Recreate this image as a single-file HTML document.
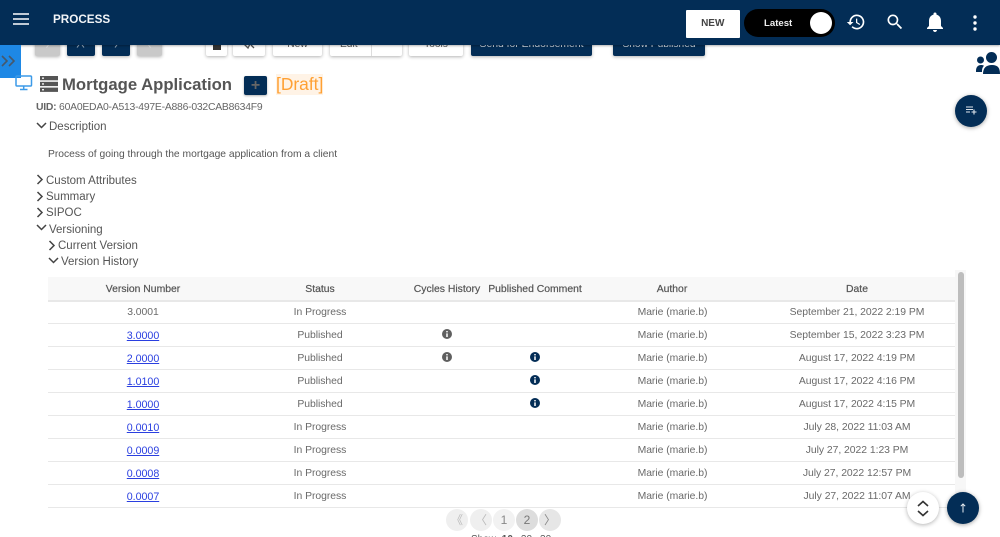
<!DOCTYPE html>
<html><head><meta charset="utf-8"><style>
html,body{margin:0;padding:0;background:#fff;width:1000px;height:537px;overflow:hidden}
#w{position:relative;width:1000px;height:537px;overflow:hidden;font-family:"Liberation Sans",sans-serif;color:#555}
.a{position:absolute}
.t{position:absolute;white-space:nowrap;line-height:14px}
.c{position:absolute;white-space:nowrap;transform:translateX(-50%);font-size:10.4px;line-height:14px;color:#6a6a6a;letter-spacing:-.04px}
.h{font-weight:400;color:#555;font-size:10.4px;-webkit-text-stroke:.2px #555;letter-spacing:0}
.l{color:#2a3fe0;text-decoration:underline;font-size:10.7px}
.sep{position:absolute;left:48px;width:907px;height:1px;background:#e8e8e8}
.b{position:absolute;top:34px;height:22px;border-radius:2px;box-shadow:0 1px 3px rgba(0,0,0,.3);background:#fff;font-size:10.2px;text-align:center;line-height:21px;color:#555;overflow:hidden;white-space:nowrap}
.n{background:#032d56;color:#cfd8e3}
.g{background:#c9c9c9}
.s{position:absolute;font-size:11.5px;line-height:14px;color:#555;white-space:nowrap}
.i{position:absolute}
.p{position:absolute;top:509px;width:22px;height:22px;border-radius:50%;background:#efefef;text-align:center;line-height:22px;font-size:12px;color:#bbb}
</style></head><body><div id="w">
<div class="b g" style="left:35px;width:25px"><svg class="i" style="left:10px;top:11px" width="5" height="3" viewBox="0 0 5 3" fill="none" stroke="#e6e6e6" stroke-width="1"><path d="M3.500 0L1.500 2.500"/></svg></div>
<div class="b n" style="left:67px;width:28px"><svg class="i" style="left:9px;top:11px" width="10" height="3" viewBox="0 0 10 3" fill="none" stroke="#9fb0c2" stroke-width="1"><path d="M3 0L1 2.500M6 0l2 2.500"/></svg></div>
<div class="b n" style="left:102px;width:28px"><svg class="i" style="left:12px;top:11px" width="4" height="3" viewBox="0 0 4 3" fill="none" stroke="#9fb0c2" stroke-width="1"><path d="M3 0L1 2.500"/></svg></div>
<div class="b g" style="left:137px;width:25px"><svg class="i" style="left:10px;top:11px" width="5" height="3" viewBox="0 0 5 3" fill="none" stroke="#e6e6e6" stroke-width="1"><path d="M1.500 0l2 2.500"/></svg></div>
<div class="b" style="left:206px;width:21px"><div class="a" style="left:7px;top:8px;width:8px;height:8px;background:#333"></div></div>
<div class="b" style="left:233px;width:32px"><svg class="i" style="left:10px;top:10px" width="12" height="6" viewBox="0 0 12 6" fill="none" stroke="#555" stroke-width="1.300"><path d="M1 0l4 4 2-4M8 1l3 3"/></svg></div>
<div class="b" style="left:273px;width:49px">New</div>
<div class="b" style="left:330px;width:72px;text-align:left"><span style="margin-left:10px">Edit</span><div class="a" style="left:41px;top:0;width:1px;height:22px;background:#ddd"></div></div>
<div class="b" style="left:409px;width:54px">Tools</div>
<div class="b n" style="left:471px;width:121px;font-size:10.400px">Send for Endorsement</div>
<div class="b n" style="left:613px;width:92px">Show Published</div>

<div class="a" style="left:0;top:0;width:1000px;height:45px;background:#032d56;box-shadow:0 1px 2px rgba(0,0,0,.3)"></div>
<svg class="i" style="left:13px;top:13px" width="16" height="12" viewBox="0 0 16 12"><path d="M0 1h16M0 6h16M0 11h16" stroke="#fff" stroke-width="1.600"/></svg>
<div class="t" style="left:53px;top:12.500px;font-size:11.700px;font-weight:700;color:#f2f4f7">PROCESS</div>
<div class="a" style="left:685.500px;top:10px;width:54.500px;height:28px;background:#fff;border-radius:1px;text-align:center;font-size:10px;font-weight:700;line-height:28px;color:#444">NEW</div>
<div class="a" style="left:744px;top:9px;width:91px;height:28px;background:#000;border-radius:14px"></div>
<div class="t" style="left:764px;top:16.500px;font-size:9.600px;font-weight:700;color:#eee">Latest</div>
<div class="a" style="left:810px;top:12px;width:22px;height:22px;background:#fff;border-radius:50%"></div>
<svg class="i" style="left:846px;top:12px" width="20" height="20" viewBox="0 0 24 24" fill="#fff"><path d="M13 3a9 9 0 0 0-9 9H1l3.900 3.900L9 12H6a7 7 0 1 1 2.050 4.950L6.640 18.360A9 9 0 1 0 13 3zm-1 5v5l4.280 2.540.72-1.210-3.500-2.080V8z"/></svg>
<svg class="i" style="left:885px;top:12px" width="20" height="20" viewBox="0 0 24 24" fill="#fff"><path d="M15.500 14h-.79l-.28-.27A6.470 6.470 0 0 0 16 9.500 6.500 6.500 0 1 0 9.500 16c1.610 0 3.090-.59 4.230-1.570l.27.28v.79l5 4.990L20.490 19zm-6 0A4.500 4.500 0 1 1 14 9.500 4.490 4.490 0 0 1 9.500 14z"/></svg>
<svg class="i" style="left:923px;top:10px" width="24" height="24" viewBox="0 0 24 24" fill="#fff"><path d="M12 22c1.100 0 2-.9 2-2h-4c0 1.100.9 2 2 2zm6-6v-5c0-3.070-1.630-5.640-4.500-6.320V4a1.500 1.500 0 0 0-3 0v.68C7.640 5.360 6 7.920 6 11v5l-2 2v1h16v-1z"/></svg>
<svg class="i" style="left:965px;top:13px" width="20" height="20" viewBox="0 0 20 20" fill="#fff"><circle cx="10" cy="4" r="1.700"/><circle cx="10" cy="10" r="1.700"/><circle cx="10" cy="16" r="1.700"/></svg>

<div class="a" style="left:0;top:45px;width:21px;height:33px;background:#1e88e5"></div>
<svg class="i" style="left:1px;top:55px" width="15" height="12" viewBox="0 0 15 12" fill="none" stroke="#46586b" stroke-width="1.600"><path d="M1 1l5 5-5 5M8 1l5 5-5 5"/></svg>
<svg class="i" style="left:15px;top:75px" width="18" height="16" viewBox="0 0 18 16" fill="none" stroke="#3c9ae8" stroke-width="1.500"><rect x="1" y="1" width="15.500" height="10" rx="1"/><path d="M8.700 11v3M5 14.500h7.500"/></svg>
<svg class="i" style="left:40px;top:76px" width="18" height="16" viewBox="0 0 18 16" fill="#555"><rect x="0" y="0" width="18" height="4.300"/><rect x="0" y="5.800" width="18" height="4.300"/><rect x="0" y="11.600" width="18" height="4.300"/><g fill="#fff"><rect x="2" y="1.500" width="2" height="1.300"/><rect x="2" y="7.300" width="2" height="1.300"/><rect x="2" y="13.100" width="2" height="1.300"/></g></svg>
<div class="t" style="left:62px;top:74.500px;font-size:16.700px;line-height:20px;font-weight:700;color:#555">Mortgage Application</div>
<div class="a" style="left:244px;top:76px;width:23px;height:19px;background:#032d56;border-radius:2px;box-shadow:0 1px 2px rgba(0,0,0,.3);text-align:center;line-height:19px;font-size:16px;font-weight:700;color:#666">+</div>
<div class="t" style="left:276px;top:74px;font-size:17.400px;line-height:21px;color:#ffa033;background:#fff3e6">[Draft]</div>
<div class="t" style="left:36px;top:100px;font-size:10.400px;color:#666;letter-spacing:-.24px;margin-top:1px"><b>UID:</b> 60A0EDA0-A513-497E-A886-032CAB8634F9</div>

<svg class="i" style="left:36px;top:122px" width="11" height="8" viewBox="0 0 11 8" fill="none" stroke="#444" stroke-width="1.500"><path d="M1 1l4.500 4.500L10 1"/></svg>
<div class="s" style="left:49px;top:120px">Description</div>
<div class="t" style="left:48px;top:147px;font-size:10.300px;color:#555;margin-top:1px">Process of going through the mortgage application from a client</div>
<svg class="i" style="left:36px;top:174px" width="8" height="11" viewBox="0 0 8 11" fill="none" stroke="#444" stroke-width="1.500"><path d="M1.500 1l4.500 4.500L1.500 10"/></svg>
<div class="s" style="left:46px;top:174px">Custom Attributes</div>
<svg class="i" style="left:36px;top:191px" width="8" height="11" viewBox="0 0 8 11" fill="none" stroke="#444" stroke-width="1.500"><path d="M1.500 1l4.500 4.500L1.500 10"/></svg>
<div class="s" style="left:46px;top:190px">Summary</div>
<svg class="i" style="left:36px;top:207px" width="8" height="11" viewBox="0 0 8 11" fill="none" stroke="#444" stroke-width="1.500"><path d="M1.500 1l4.500 4.500L1.500 10"/></svg>
<div class="s" style="left:46px;top:206px">SIPOC</div>
<svg class="i" style="left:36px;top:224px" width="11" height="8" viewBox="0 0 11 8" fill="none" stroke="#444" stroke-width="1.500"><path d="M1 1l4.500 4.500L10 1"/></svg>
<div class="s" style="left:49px;top:223px">Versioning</div>
<svg class="i" style="left:48px;top:240px" width="8" height="11" viewBox="0 0 8 11" fill="none" stroke="#444" stroke-width="1.500"><path d="M1.500 1l4.500 4.500L1.500 10"/></svg>
<div class="s" style="left:58px;top:239px">Current Version</div>
<svg class="i" style="left:48px;top:257px" width="11" height="8" viewBox="0 0 11 8" fill="none" stroke="#444" stroke-width="1.500"><path d="M1 1l4.500 4.500L10 1"/></svg>
<div class="s" style="left:61px;top:255px">Version History</div>

<div class="a" style="left:48px;top:277px;width:907px;height:23px;background:#f8f8f8"></div>
<div class="a" style="left:955px;top:270px;width:11px;height:238px;background:#f7f7f7"></div>
<div class="a" style="left:958px;top:272px;width:6px;height:206px;background:#bdbdbd;border-radius:3px"></div>
<div class="c h" style="left:143px;top:283px">Version Number</div>
<div class="c h" style="left:320px;top:283px">Status</div>
<div class="c h" style="left:447px;top:283px">Cycles History</div>
<div class="c h" style="left:535px;top:283px">Published Comment</div>
<div class="c h" style="left:672px;top:283px">Author</div>
<div class="c h" style="left:857px;top:283px">Date</div>
<div class="sep" style="top:300px;height:2px"></div><div class="sep" style="top:323px"></div><div class="sep" style="top:346px"></div><div class="sep" style="top:369px"></div><div class="sep" style="top:392px"></div><div class="sep" style="top:415px"></div><div class="sep" style="top:438px"></div><div class="sep" style="top:461px"></div><div class="sep" style="top:484px"></div><div class="sep" style="top:507px"></div>

<div class="c" style="left:143px;top:306px">3.0001</div><div class="c" style="left:320px;top:306px">In Progress</div><div class="c" style="left:672.500px;top:306px">Marie (marie.b)</div><div class="c" style="left:857px;top:306px">September 21, 2022 2:19 PM</div>
<div class="c l" style="left:143px;top:329px">3.0000</div><div class="c" style="left:320px;top:329px">Published</div><div class="c" style="left:672.500px;top:329px">Marie (marie.b)</div><div class="c" style="left:857px;top:329px">September 15, 2022 3:23 PM</div>
<div class="c l" style="left:143px;top:352px">2.0000</div><div class="c" style="left:320px;top:352px">Published</div><div class="c" style="left:672.500px;top:352px">Marie (marie.b)</div><div class="c" style="left:857px;top:352px">August 17, 2022 4:19 PM</div>
<div class="c l" style="left:143px;top:375px">1.0100</div><div class="c" style="left:320px;top:375px">Published</div><div class="c" style="left:672.500px;top:375px">Marie (marie.b)</div><div class="c" style="left:857px;top:375px">August 17, 2022 4:16 PM</div>
<div class="c l" style="left:143px;top:398px">1.0000</div><div class="c" style="left:320px;top:398px">Published</div><div class="c" style="left:672.500px;top:398px">Marie (marie.b)</div><div class="c" style="left:857px;top:398px">August 17, 2022 4:15 PM</div>
<div class="c l" style="left:143px;top:421px">0.0010</div><div class="c" style="left:320px;top:421px">In Progress</div><div class="c" style="left:672.500px;top:421px">Marie (marie.b)</div><div class="c" style="left:857px;top:421px">July 28, 2022 11:03 AM</div>
<div class="c l" style="left:143px;top:444px">0.0009</div><div class="c" style="left:320px;top:444px">In Progress</div><div class="c" style="left:672.500px;top:444px">Marie (marie.b)</div><div class="c" style="left:857px;top:444px">July 27, 2022 1:23 PM</div>
<div class="c l" style="left:143px;top:467px">0.0008</div><div class="c" style="left:320px;top:467px">In Progress</div><div class="c" style="left:672.500px;top:467px">Marie (marie.b)</div><div class="c" style="left:857px;top:467px">July 27, 2022 12:57 PM</div>
<div class="c l" style="left:143px;top:490px">0.0007</div><div class="c" style="left:320px;top:490px">In Progress</div><div class="c" style="left:672.500px;top:490px">Marie (marie.b)</div><div class="c" style="left:857px;top:490px">July 27, 2022 11:07 AM</div>

<svg class="i" style="left:442px;top:329px" width="10" height="10" viewBox="0 0 10 10"><circle cx="5" cy="5" r="5" fill="#5f5f5f"/><path d="M5 2v1.400M5 4.400V8" stroke="#fff" stroke-width="1.500"/></svg>
<svg class="i" style="left:442px;top:352px" width="10" height="10" viewBox="0 0 10 10"><circle cx="5" cy="5" r="5" fill="#5f5f5f"/><path d="M5 2v1.400M5 4.400V8" stroke="#fff" stroke-width="1.500"/></svg>
<svg class="i" style="left:530px;top:352px" width="10" height="10" viewBox="0 0 10 10"><circle cx="5" cy="5" r="5" fill="#032d56"/><path d="M5 2v1.400M5 4.400V8" stroke="#fff" stroke-width="1.500"/></svg>
<svg class="i" style="left:530px;top:375px" width="10" height="10" viewBox="0 0 10 10"><circle cx="5" cy="5" r="5" fill="#032d56"/><path d="M5 2v1.400M5 4.400V8" stroke="#fff" stroke-width="1.500"/></svg>
<svg class="i" style="left:530px;top:398px" width="10" height="10" viewBox="0 0 10 10"><circle cx="5" cy="5" r="5" fill="#032d56"/><path d="M5 2v1.400M5 4.400V8" stroke="#fff" stroke-width="1.500"/></svg>

<div class="p" style="left:446px">《</div><div class="p" style="left:470px">〈</div>
<div class="p" style="left:493px;background:#f2f2f2;color:#888">1</div><div class="p" style="left:516px;background:#ddd;color:#777">2</div>
<div class="p" style="left:539px;background:#e6e6e6;color:#888">〉</div>
<div class="t" style="left:471px;top:533px;font-size:10px;color:#555">Show <b style="margin-left:3px">10</b><span style="margin-left:8px">20</span><span style="margin-left:8px">30</span></div>

<svg class="i" style="left:976px;top:51px" width="24" height="24" viewBox="0 0 24 24" fill="#032d56"><circle cx="15.500" cy="6.500" r="5.500"/><circle cx="4.500" cy="9" r="3.500"/><path d="M0 20c0-4 2-6 5-6 1 0 2 .2 3 .8-1.500 1.500-2 3-2 5.200v1H0zM7 23c0-6 3-9 9-9s8 3 8 9z"/></svg>
<div class="a" style="left:955px;top:95px;width:32px;height:32px;border-radius:50%;background:#032d56;box-shadow:0 1px 4px rgba(0,0,0,.35)"></div>
<svg class="i" style="left:966px;top:106px" width="11" height="9" viewBox="0 0 11 9" stroke="#dfe5ec" stroke-width="1.100" fill="none"><path d="M0 1h7M0 3.500h7M0 6h4M8 3.500v5M5.500 6h5"/></svg>
<div class="a" style="left:907px;top:492px;width:32px;height:32px;border-radius:50%;background:#fff;box-shadow:0 1px 4px rgba(0,0,0,.3)"></div>
<svg class="i" style="left:917px;top:500px" width="12" height="17" viewBox="0 0 12 17" fill="none" stroke="#333" stroke-width="1.600"><path d="M1 6l5-4.500L11 6M1 11l5 4.500L11 11"/></svg>
<div class="a" style="left:947px;top:492px;width:32px;height:32px;border-radius:50%;background:#032d56;box-shadow:0 1px 4px rgba(0,0,0,.35)"></div>
<svg class="i" style="left:959px;top:503px" width="8" height="10" viewBox="0 0 8 10" fill="none" stroke="#e8edf2" stroke-width="1"><path d="M4 9.500V1M1.800 3.200L4 1l2.200 2.200"/></svg>
</div></body></html>
